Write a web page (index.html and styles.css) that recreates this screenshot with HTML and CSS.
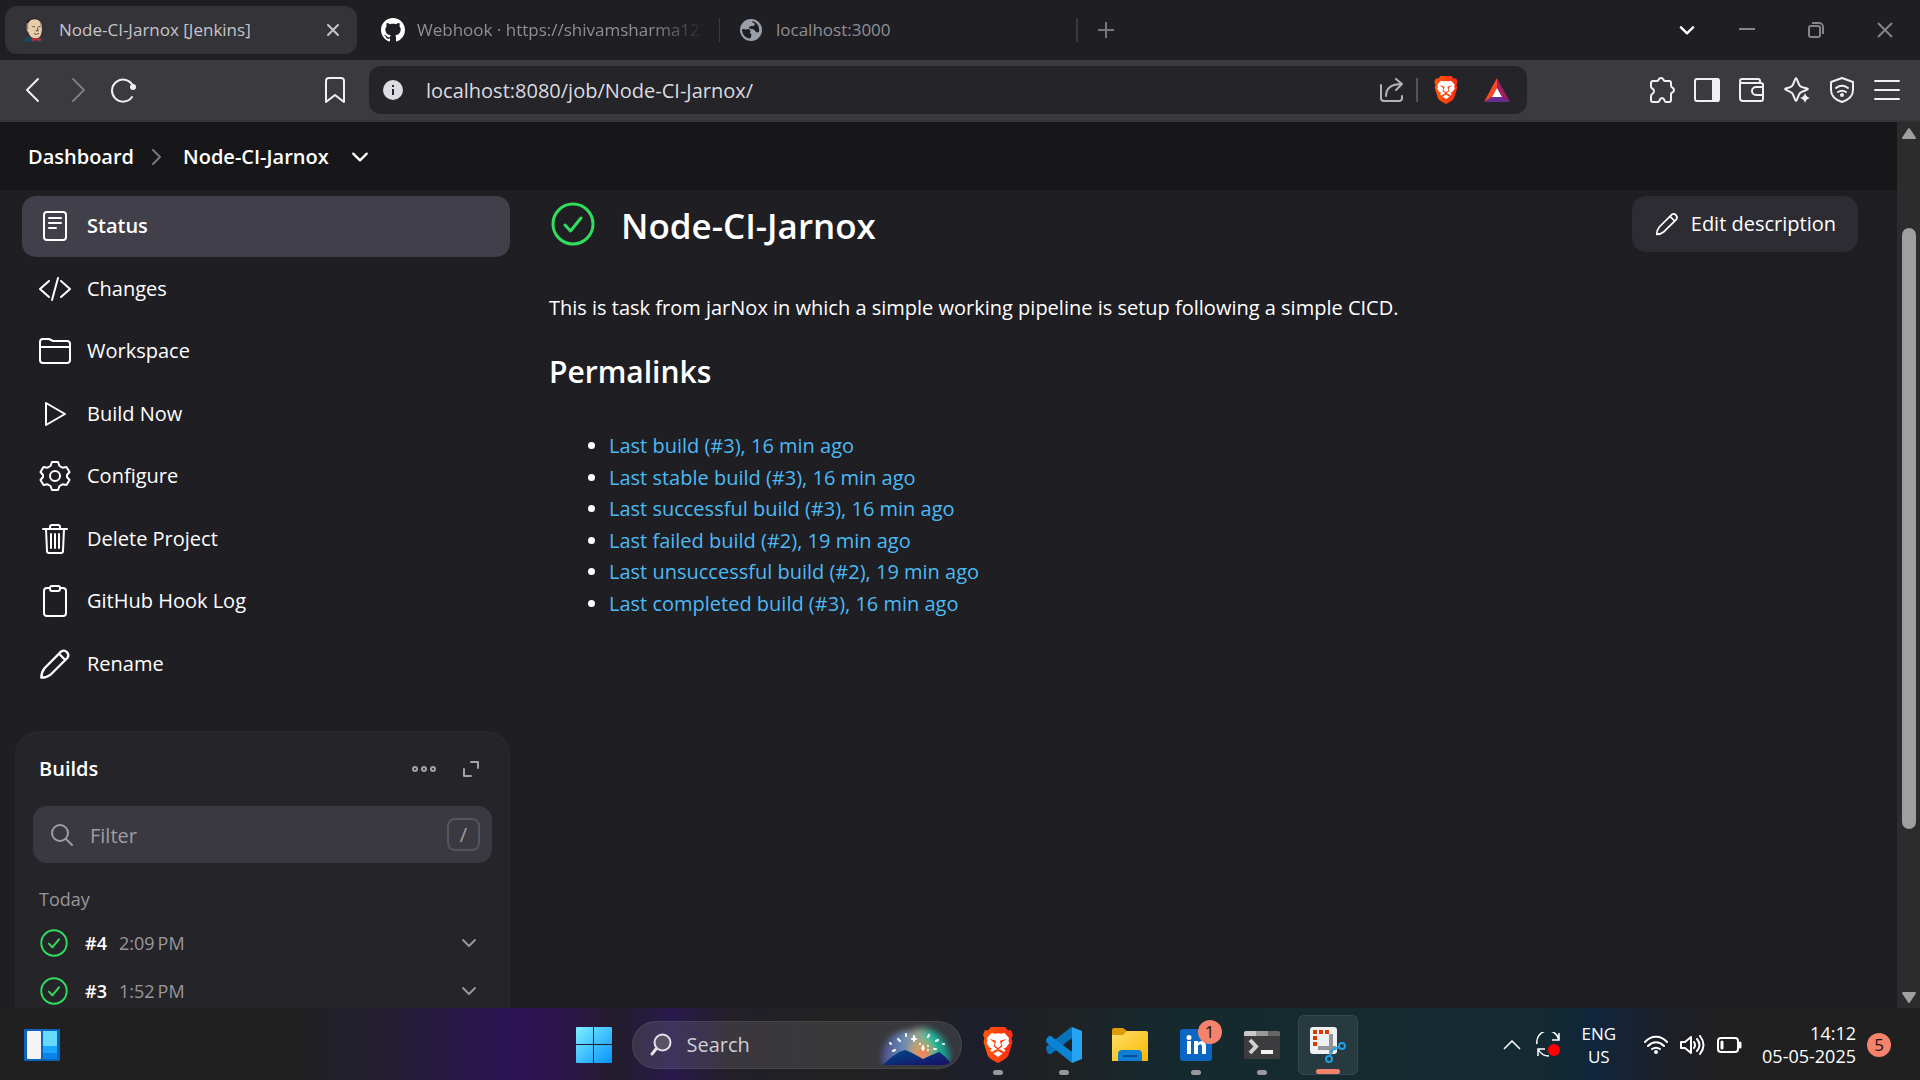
FILE: index.html
```html
<!DOCTYPE html>
<html lang="en">
<head>
<meta charset="utf-8">
<title>Node-CI-Jarnox [Jenkins]</title>
<link rel="stylesheet" href="styles.css">
</head>
<body>
<svg class="defs" aria-hidden="true">
  <defs>
    <linearGradient id="lion-bg" x1="0" x2="1"><stop offset="0" stop-color="#ff5a0a"/><stop offset="1" stop-color="#ff2a14"/></linearGradient>
    <symbol id="lion" viewBox="0 0 30 36">
      <path fill="url(#lion-bg)" d="M8 0h14l3 3.500 3-.5 2 5-1.500 3 1 4-4 13c-1 3-7 6.500-10.500 8-3.500-1.500-9.500-5-10.500-8L.5 15l1-4L0 8l2-5 3 .5z"/>
      <path fill="#fff" d="M8.500 6l3.500.8L15 6.300l3 .5 3.500-.8 4.500 5-.5 3 1 2-3.500 4.500-2.500 1 2 2-1.500 1.500-3-2-3-1-3 1-3 2L7 23.500l2-2-2.500-1L3.500 16l1-2-.5-3z"/>
      <path fill="#fff" d="M15 24l4.500 2.500L15 30l-4.500-3.500z"/>
      <path fill="#ff4310" d="M6.500 12l6 1.500.5 1-1.200 4L15 21l3.200-2.500-1.200-4 .5-1 6-1.500-4.500 3.200-.5 1.300 1 2.700L15 22.700l-4.500-3.500 1-2.700-.5-1.300z"/>
    </symbol>
    <symbol id="ok" viewBox="0 0 44 44">
      <circle cx="22" cy="22" r="20" fill="none" stroke="#30de5d" stroke-width="3"/>
      <path fill="none" stroke="#30de5d" stroke-width="3" stroke-linecap="round" stroke-linejoin="round" d="M14 23l5.500 6L30 16"/>
    </symbol>
    <symbol id="pencil" viewBox="0 0 28 28">
      <path d="M2 26c0-3 1-6 3-8.500L19.500 3a4 4 0 0 1 5.500 5.500L10.500 23C8 25 5 26 2 26zM17.500 5l5.500 5.500"/>
    </symbol>
    <symbol id="chev" viewBox="0 0 16 10"><path d="M2 2l6 6 6-6"/></symbol>
  </defs>
</svg>

<header class="tabs">
  <div class="tab tab-active">
    <svg class="fav" viewBox="0 0 24 28"><path fill="#16495c" d="M0 28c0-4 3-6 7-6l7 3 5-2c3 0 5 2 5 5z"/><path fill="#2b2320" d="M3 14C1 6 4 0 12 0c8 0 11 6 9 14z"/><path fill="#e8cda9" d="M4 12C4 5 7 1 13 1s9 5 8.500 12c-.5 8-3 11-7.500 11-6 0-8-5-9-8-2 0-2-4-1-4z"/><path fill="#8c8a86" d="M3 6l2 0v8l-2-1zM19 5l2 1v6z"/><path fill="none" stroke="#3a2c26" d="M10 10h3M17 10h3M16 11l1 4h-3M12 18c2 2 4 1 6 0"/><path fill="#d8232a" d="M10 23l5 2 5-2v5l-5-2-5 2z"/></svg>
    <a class="tab-name" href="#jenkins">Node-CI-Jarnox [Jenkins]</a>
    <button class="plain tab-close" aria-label="Close tab"><svg class="ln" width="16" height="16" viewBox="0 0 16 16"><path d="M3 3l10 10M13 3L3 13"/></svg></button>
  </div>
  <div class="tab tab-hook">
    <svg width="24" height="24" viewBox="0 0 16 16" fill="#fff"><path d="M8 0C3.580 0 0 3.580 0 8c0 3.540 2.290 6.530 5.470 7.590.4.070.55-.17.55-.38 0-.19-.01-.82-.01-1.490-2.010.37-2.530-.49-2.690-.94-.09-.23-.48-.94-.82-1.130-.28-.15-.68-.52-.01-.53.63-.01 1.080.58 1.230.82.72 1.210 1.870.87 2.330.66.07-.52.28-.87.51-1.070-1.780-.2-3.640-.89-3.640-3.950 0-.87.31-1.590.82-2.150-.08-.2-.36-1.020.08-2.120 0 0 .67-.21 2.200.82.64-.18 1.320-.27 2-.27s1.360.09 2 .27c1.530-1.040 2.200-.82 2.200-.82.44 1.100.16 1.920.08 2.120.51.56.82 1.270.82 2.150 0 3.070-1.870 3.750-3.650 3.950.29.25.54.73.54 1.480 0 1.070-.01 1.930-.01 2.200 0 .21.15.46.55.38A8 8 0 0 0 16 8c0-4.420-3.580-8-8-8z"/></svg>
    <a class="tab-name tab-fade" href="#hook">Webhook · https://shivamsharma123</a>
  </div>
  <div class="tab tab-local">
    <svg width="22" height="22" viewBox="0 0 22 22"><circle cx="11" cy="11" r="11" fill="#9aa0a9"/><path fill="#1f1e23" d="M2 10c2 0 4 1 6 0 2 0 3 2 2 4 2 1 2 3 0 5.500C6 19.500 2 16 2 10zM11 2c2 0 1 2 3 2 2 1 0 3-1 3-2 0-4 0-4 2 1 2 5 0 6 3 1 1 2 2 4 1 1-5-2-11-8-11z"/></svg>
    <a class="tab-name" href="#local">localhost:3000</a>
  </div>
  <button class="plain tab-add" aria-label="New tab"><svg class="ln" width="18" height="18" viewBox="0 0 18 18"><path d="M9 1v16M1 9h16"/></svg></button>
  <div class="win-controls">
    <button class="plain bright" aria-label="Search tabs"><svg class="ln" width="18" height="12"><use href="#chev"/></svg></button>
    <button class="plain" aria-label="Minimize"><svg class="ln" width="16" height="16" viewBox="0 0 16 16"><path d="M0 7h16"/></svg></button>
    <button class="plain" aria-label="Restore"><svg class="ln" width="16" height="16" viewBox="0 0 16 16"><rect x="1" y="4" width="11" height="11" rx="2"/><path d="M4 1h7a4 4 0 0 1 4 4v7"/></svg></button>
    <button class="plain" aria-label="Close"><svg class="ln" width="16" height="16" viewBox="0 0 16 16"><path d="M1 1l14 14M15 1L1 15"/></svg></button>
  </div>
</header>

<nav class="toolbar" aria-label="Browser">
  <div class="nav-buttons">
    <button class="plain" aria-label="Back"><svg class="ln" width="26" height="26" viewBox="0 0 26 26"><path d="M18 2L7 13l11 11"/></svg></button>
    <button class="plain dim" aria-label="Forward"><svg class="ln" width="26" height="26" viewBox="0 0 26 26"><path d="M8 2l11 11L8 24"/></svg></button>
    <button class="plain" aria-label="Reload"><svg class="ln" width="26" height="26" viewBox="0 0 26 26"><path d="M22 20a11 11 0 1 1 1-11"/><circle cx="23" cy="10" r="2" fill="currentColor"/></svg></button>
  </div>
  <button class="plain" aria-label="Bookmark"><svg class="ln" width="20" height="26" viewBox="0 0 20 26"><path d="M1 4a3 3 0 0 1 3-3h12a3 3 0 0 1 3 3v21l-9-7-9 7z"/></svg></button>
  <div class="address">
    <svg width="20" height="20" viewBox="0 0 20 20"><circle cx="10" cy="10" r="10" fill="#dddce2"/><path stroke="#252429" stroke-width="2" d="M10 9v6M10 5v2"/></svg>
    <input class="url" aria-label="Address" value="localhost:8080/job/Node-CI-Jarnox/">
    <button class="plain share" aria-label="Share"><svg class="ln" width="24" height="24" viewBox="0 0 24 24"><path d="M1 7v13a3 3 0 0 0 3 3h15a3 3 0 0 0 3-3v-2M6 18C6 10 11 6 22 6M16 1l6 5-6 6"/></svg></button>
    <span class="bar"></span>
    <button class="plain shield" aria-label="Shields"><svg width="24" height="28"><use href="#lion"/></svg></button>
    <button class="plain" aria-label="Rewards"><svg width="26" height="24" viewBox="0 0 26 24"><path fill="#ff4724" d="M13 0L0 24l8-5 5-9z"/><path fill="#9e1f63" d="M13 0l13 24-8-5-5-9z"/><path fill="#662d91" d="M0 24h26l-8-5H8z"/><path fill="#fff" d="M13 10l5 9H8z"/></svg></button>
  </div>
  <div class="ext">
    <button class="plain" aria-label="Extensions"><svg class="ln" width="26" height="26" viewBox="0 0 26 26"><path d="M4 4h4c2 0 1-3 4-3s2 3 4 3h4a2 2 0 0 1 2 2v3c0 2 3 1 3 4s-3 2-3 4v6a2 2 0 0 1-2 2h-3c-2 0-1-4-4-4s-2 4-4 4H4a2 2 0 0 1-2-2v-4c0-2 3-2 3-5s-3-2-3-4V6a2 2 0 0 1 2-2z"/></svg></button>
    <button class="plain" aria-label="Sidebar"><svg class="ln" width="26" height="26" viewBox="0 0 26 26"><rect x="1" y="2" width="24" height="22" rx="2"/><path fill="currentColor" d="M19 2h5v22h-5z"/></svg></button>
    <button class="plain" aria-label="Wallet"><svg class="ln" width="26" height="26" viewBox="0 0 26 26"><path d="M1 6v15a3 3 0 0 0 3 3h18a2 2 0 0 0 2-2V8a2 2 0 0 0-2-2H3a2 2 0 0 1 0-4h16a2 2 0 0 1 2 2v2M24 10h-7a4 4 0 0 0 0 8h7z"/></svg></button>
    <button class="plain" aria-label="Assistant"><svg class="ln" width="26" height="26" viewBox="0 0 26 26"><path d="M12 1c1 0 2 6 4 8s8 2 8 3-6 2-8 4-3 8-4 8-2-6-4-8-7-3-7-4 5-1 7-3 3-8 4-8z"/><path fill="currentColor" stroke="none" d="M21 16c1 3 2 4 5 5-3 1-4 2-5 5-1-3-2-4-5-5 3-1 4-2 5-5z"/></svg></button>
    <button class="plain" aria-label="VPN"><svg class="ln" width="26" height="26" viewBox="0 0 26 26"><path d="M13 1l11 4v8c0 6-5 10-11 12C7 23 2 19 2 13V5zM7 11c4-3 8-3 12 0M9 15c3-2 5-2 8 0"/><circle cx="13" cy="18" r="1" fill="currentColor"/></svg></button>
    <button class="plain" aria-label="Menu"><svg class="ln" width="26" height="26" viewBox="0 0 26 26"><path d="M1 4h24M1 13h24M1 22h24"/></svg></button>
  </div>
</nav>

<div class="viewport">
  <div class="page">
    <nav class="crumbs" aria-label="Breadcrumb">
      <a href="#dashboard">Dashboard</a>
      <svg class="ln crumb-sep" width="10" height="16" viewBox="0 0 10 16"><path d="M1 1l7 7-7 7"/></svg>
      <a href="#job">Node-CI-Jarnox</a>
      <button class="plain" aria-label="Job menu"><svg class="ln" width="18" height="12"><use href="#chev"/></svg></button>
    </nav>
    <div class="columns">
      <aside class="side">
        <ul class="tasks">
          <li><a class="task task-on" href="#status"><svg class="ln" viewBox="0 0 32 32"><rect x="5" y="2" width="22" height="28" rx="3"/><path d="M10 8h12M10 13h12M10 18h7"/></svg>Status</a></li>
          <li><a class="task" href="#changes"><svg class="ln" viewBox="0 0 32 32"><path d="M10 8l-9 8 9 8M22 8l9 8-9 8M19 5l-6 22"/></svg>Changes</a></li>
          <li><a class="task" href="#workspace"><svg class="ln" viewBox="0 0 32 32"><path d="M1 25V7a3 3 0 0 1 3-3h6l4 2h14a3 3 0 0 1 3 3v16a3 3 0 0 1-3 3H4a3 3 0 0 1-3-3zM1 12h30"/></svg>Workspace</a></li>
          <li><a class="task" href="#build"><svg class="ln" viewBox="0 0 32 32"><path d="M7 5v22l19-11z"/></svg>Build Now</a></li>
          <li><a class="task" href="#configure"><svg class="ln" viewBox="0 0 32 32"><circle cx="16" cy="16" r="5"/><path d="M13 2h6l1.500 4 3 1.700 4-.7 3 5-2.500 3v2l2.500 3-3 5-4-.7-3 1.700L19 30h-6l-1.500-4-3-1.700-4 .7-3-5L4 17v-2l-2.500-3 3-5 4 .7 3-1.700z"/></svg>Configure</a></li>
          <li><a class="task" href="#delete"><svg class="ln" viewBox="0 0 32 32"><path d="M4 6h24M11 6V4a2 2 0 0 1 2-2h6a2 2 0 0 1 2 2v2M7 6l1 22a2 2 0 0 0 2 2h12a2 2 0 0 0 2-2l1-22M12 11v14M16 11v14M20 11v14"/></svg>Delete Project</a></li>
          <li><a class="task" href="#hook-log"><svg class="ln" viewBox="0 0 32 32"><path d="M11 3H8a3 3 0 0 0-3 3v22a3 3 0 0 0 3 3h16a3 3 0 0 0 3-3V6a3 3 0 0 0-3-3h-3"/><rect x="11" y="1" width="10" height="5" rx="2"/></svg>GitHub Hook Log</a></li>
          <li><a class="task" href="#rename"><svg class="ln" viewBox="0 0 28 28"><use href="#pencil"/></svg>Rename</a></li>
        </ul>
        <section class="card">
          <div class="card-head">
            <h2>Builds</h2>
            <button class="plain" aria-label="More"><svg class="ln" width="24" height="8" viewBox="0 0 24 8"><circle cx="3" cy="4" r="2"/><circle cx="12" cy="4" r="2"/><circle cx="21" cy="4" r="2"/></svg></button>
            <button class="plain" aria-label="Expand"><svg class="ln" width="18" height="18" viewBox="0 0 18 18"><path d="M9 2h7v6M2 9v7h7"/></svg></button>
          </div>
          <div class="filter">
            <svg class="ln" width="22" height="22" viewBox="0 0 22 22"><circle cx="9" cy="9" r="8"/><path d="M15 15l6 6"/></svg>
            <input aria-label="Filter builds" placeholder="Filter">
            <kbd>/</kbd>
          </div>
          <h3>Today</h3>
          <ul class="builds">
            <li><svg width="28" height="28"><use href="#ok"/></svg><a href="#4">#4</a><span>2:09&#8201;PM</span><button class="plain" aria-label="Build 4 menu"><svg class="ln" width="16" height="10"><use href="#chev"/></svg></button></li>
            <li><svg width="28" height="28"><use href="#ok"/></svg><a href="#3">#3</a><span>1:52&#8201;PM</span><button class="plain" aria-label="Build 3 menu"><svg class="ln" width="16" height="10"><use href="#chev"/></svg></button></li>
          </ul>
        </section>
      </aside>
      <main class="main">
        <div class="job-head">
          <svg width="44" height="44"><use href="#ok"/></svg>
          <h1>Node-CI-Jarnox</h1>
          <button class="edit"><svg class="ln" width="24" height="24"><use href="#pencil"/></svg>Edit description</button>
        </div>
        <p class="desc">This is task from jarNox in which a simple working pipeline is setup following a simple CICD.</p>
        <h2 class="perma">Permalinks</h2>
        <ul class="links">
          <li><a href="#l1">Last build (#3), 16 min ago</a></li>
          <li><a href="#l2">Last stable build (#3), 16 min ago</a></li>
          <li><a href="#l3">Last successful build (#3), 16 min ago</a></li>
          <li><a href="#l4">Last failed build (#2), 19 min ago</a></li>
          <li><a href="#l5">Last unsuccessful build (#2), 19 min ago</a></li>
          <li><a href="#l6">Last completed build (#3), 16 min ago</a></li>
        </ul>
      </main>
    </div>
  </div>
  <div class="scroll" aria-hidden="true">
    <svg width="16" height="14" viewBox="0 0 16 14"><path fill="#9f9f9f" stroke="#9f9f9f" stroke-width="2" stroke-linejoin="round" d="M8 3l6 9H2z"/></svg>
    <span class="track-top"></span><span class="thumb"></span><span class="track-end"></span>
    <svg width="16" height="14" viewBox="0 0 16 14"><path fill="#9f9f9f" stroke="#9f9f9f" stroke-width="2" stroke-linejoin="round" d="M2 2h12l-6 9z"/></svg>
  </div>
</div>

<footer class="taskbar">
  <button class="plain widgets" aria-label="Widgets"><svg width="36" height="32" viewBox="0 0 36 32"><rect width="36" height="32" rx="1" fill="#0a64b8"/><rect x="3" y="2" width="14" height="28" rx="1" fill="#f4f4f4"/><path fill="#66d9ff" d="M19 2h14v15H19z"/><path fill="#1ba5fb" d="M19 17h14v7H19z"/><path fill="#0a84ea" d="M19 24h14v6H19z"/></svg></button>
  <div class="apps">
    <button class="plain start" aria-label="Start"><svg width="36" height="36" viewBox="0 0 36 36"><defs><linearGradient id="win" x1="0" y1="0" x2="36" y2="36" gradientUnits="userSpaceOnUse"><stop offset="0" stop-color="#7df0ff"/><stop offset="1" stop-color="#0792fb"/></linearGradient></defs><path fill="url(#win)" d="M0 1q0-1 1-1h16v17H0zM18 0h17q1 0 1 1v16H18zM0 18h17v18H1q-1 0-1-1zM18 18h18v17q0 1-1 1H18z"/></svg></button>
    <label class="search">
      <svg width="22" height="23" viewBox="0 0 22 23" fill="none" stroke="#e6e2ea" stroke-width="3" stroke-linecap="round"><circle cx="12.500" cy="9.500" r="8" fill="#5b5268" stroke-width="2"/><path d="M6 16l-4 5"/></svg>
      <input aria-label="Search" placeholder="Search">
      <svg width="76" height="44" viewBox="0 0 76 44"><defs><linearGradient id="sky"><stop offset="0" stop-color="#4b4c92"/><stop offset=".3" stop-color="#6787b5"/><stop offset=".52" stop-color="#a3a48c"/><stop offset=".72" stop-color="#22bda0"/><stop offset="1" stop-color="#188b83"/></linearGradient><linearGradient id="hill" x1="0" y1="0" x2="1" y2="1"><stop offset="0" stop-color="#004d86"/><stop offset="1" stop-color="#1b0767"/></linearGradient><radialGradient id="glow"><stop offset="0" stop-color="#ff7a58"/><stop offset="1" stop-color="#e9b34d" stop-opacity="0"/></radialGradient><filter id="soft" x="-20%" y="-20%" width="140%" height="140%"><feGaussianBlur stdDeviation="3"/></filter><clipPath id="hc"><path d="M0 0h76v28q0 14-12 14H6q-6 0-6-8z"/></clipPath></defs>
      <g clip-path="url(#hc)"><path filter="url(#soft)" fill="url(#sky)" d="M4 42C2 20 16 6 34 8c6-6 34-4 38 26l-2 8z"/><circle cx="45" cy="30" r="17" fill="url(#glow)"/><path fill="url(#hill)" d="M2 44C12 36 18 29 27 27q6 2 18 9 8-4 16-7 7 4 14 15z"/><path stroke="#fff" stroke-width="2" stroke-linecap="round" d="M15 28l2-1M12 20l1 1M20 16l2 2M28 11v2M50 14l1-2M58 18l2-1M65 21h1M56 26h2M36 13v5M34 16h4M44 25h2M45 23v4M42 21h0M50 23h0M50 27h0"/></g></svg>
    </label>
    <button class="plain app app-run" aria-label="Brave"><svg width="30" height="36"><use href="#lion"/></svg></button>
    <button class="plain app app-run" aria-label="Visual Studio Code"><svg width="36" height="36" viewBox="0 0 36 36"><path fill="#0873bd" d="M1 25l-1-4q0-1 1-2L24 1l2-1v11L5 27q-2 1-4-2z"/><path fill="#0a84d2" d="M1 11q2-3 4-2l21 16v11L1 16q-2-2 0-5z"/><path fill="#26a4f2" d="M26 0l10 4v28l-10 4z"/></svg></button>
    <button class="plain app" aria-label="File Explorer"><svg width="36" height="34" viewBox="0 0 36 34"><defs><linearGradient id="fold" x1="0" y1="0" x2="1" y2="1"><stop offset="0" stop-color="#ffdd6b"/><stop offset="1" stop-color="#f9b900"/></linearGradient></defs><path fill="#dd9b06" d="M0 2q0-2 2-2h9l4 3v8H0z"/><path fill="url(#fold)" d="M0 7h11l4-4h19q2 0 2 2v28H0z"/><path fill="#0f7fd4" d="M6 33V26q0-4 4-4h16q4 0 4 4v7z"/><path stroke="#084f97" stroke-width="2" d="M11 28h14"/></svg></button>
    <button class="plain app app-run" aria-label="LinkedIn"><svg width="32" height="32" viewBox="0 0 32 32"><rect width="32" height="32" rx="3" fill="#0a66c2"/><path fill="#fff" d="M7 12h4v13H7zM14 12h4v2c2-3 8-3 8 3v8h-4v-7c0-4-4-3-4 0v7h-4z"/><circle cx="9" cy="8.500" r="2.500" fill="#fff"/></svg><span class="badge app-badge">1</span></button>
    <button class="plain app app-run" aria-label="Terminal"><svg width="36" height="28" viewBox="0 0 36 28"><rect width="36" height="28" rx="2" fill="#3c3c3e"/><path fill="#c9c9c9" d="M0 5V2q0-2 2-2h10v5z"/><path fill="#999" d="M12 0h12v5H12z"/><path fill="#666" d="M24 0h10q2 0 2 2v3H24z"/><path fill="none" stroke="#d0d0d0" stroke-width="4" d="M6 9l6 6.500L6 22"/><path fill="#f2f2f2" d="M17 19h12v4H17z"/></svg></button>
    <button class="plain app app-on" aria-label="Snipping Tool"><svg width="36" height="36" viewBox="0 0 36 36"><rect width="27" height="27" rx="3" fill="#eef0f2"/><path fill="none" stroke="#d83b01" stroke-width="4" stroke-dasharray="4 2" d="M3 5h16M5 9v10"/><path fill="none" stroke="#8f959b" stroke-width="4" d="M21 7v19M8 21h18"/><g fill="none" stroke="#1ea0e6" stroke-width="2"><circle cx="32" cy="19" r="3"/><circle cx="19" cy="32" r="3"/><path d="M29 20l-7 3-2 6"/></g></svg></button>
  </div>
  <div class="tray">
    <button class="plain" aria-label="Hidden icons"><svg width="18" height="10" viewBox="0 0 18 10"><path fill="none" stroke="#fff" stroke-width="1.500" d="M1 9l8-8 8 8"/></svg></button>
    <button class="plain" aria-label="Update"><svg width="25" height="25" viewBox="0 0 25 25"><path fill="none" stroke="#fff" stroke-width="1.500" d="M1 12A11 11 0 0 1 23 8M23 1v7h-7M13 24C8 24 4 21 2 17M2 24v-7h7"/><circle cx="18" cy="18" r="6" fill="#f00"/></svg></button>
    <button class="plain lang"><span>ENG</span><span>US</span></button>
    <button class="plain sys" aria-label="Network, volume and battery">
      <svg class="ln" width="24" height="20" viewBox="0 0 24 20"><path d="M1 7c6-7 16-7 22 0M4 11c5-5 11-5 16 0M8 14c3-2 5-2 8 0"/><circle cx="12" cy="17" r="1" fill="currentColor"/></svg>
      <svg class="ln" width="25" height="20" viewBox="0 0 25 20"><path d="M1 7h4l6-5v16l-6-5H1zM14 7q2 3 0 6M17 4q5 6 0 12M20 1q7 9 0 18"/></svg>
      <svg class="ln" width="25" height="18" viewBox="0 0 25 18"><rect x="1" y="2" width="20" height="14" rx="3"/><path d="M23 7v4" stroke-width="3"/><path d="M5 6v6" stroke-width="3"/></svg>
    </button>
    <button class="plain clock"><span>14:12</span><span>05-05-2025</span></button>
    <span class="badge">5</span>
  </div>
</footer>
</body>
</html>
```
FILE: styles.css
```css
* { box-sizing: border-box; }

body {
  margin: 0;
  height: 100vh;
  display: flex;
  flex-direction: column;
  overflow: hidden;
  background: #1f1e23;
  color: #fff;
  font: 20px/30px "Open Sans", "Noto Sans", sans-serif;
}

a { color: inherit; text-decoration: none; }
ul { list-style: none; margin: 0; padding: 0; }
h1, h2, h3, p { margin: 0; }
svg { flex: none; display: block; }
input { font: inherit; color: inherit; background: none; border: 0; padding: 0; outline: 0; min-width: 0; flex: 1; }

.defs { position: absolute; width: 0; height: 0; }
.ln { fill: none; stroke: currentColor; stroke-width: 2; stroke-linecap: round; stroke-linejoin: round; }
.plain { display: flex; align-items: center; justify-content: center; padding: 0; border: 0; background: none; color: inherit; font: inherit; }

/* Tab strip */
.tabs { display: flex; align-items: center; height: 60px; flex: none; padding-left: 5px; background: #1f1e23; color: #8f8e94; font-size: 17px; }
.tab { display: flex; align-items: center; height: 48px; }
.tab-active { width: 352px; padding: 0 16px 0 19px; gap: 15px; border-radius: 12px; background: #343338; color: #c6c5ca; }
.fav { width: 20px; height: 24px; }
.tab-name { flex: 1; overflow: hidden; white-space: nowrap; }
.tab-hook { width: 362px; padding: 0 14px 0 24px; gap: 12px; }
.tab-fade { mask-image: linear-gradient(to right, #000 82%, transparent); }
.tab-local { width: 359px; height: 24px; padding-left: 20px; gap: 14px; border: solid #3b3a3f; border-width: 0 2px 0 1px; }
.tab-add { width: 56px; color: #77767c; }
.tab-add .ln { stroke-linecap: butt; }
.win-controls { margin-left: auto; display: flex; padding-right: 1px; color: #858489; }
.win-controls button { width: 69px; height: 48px; }
.win-controls button:first-child { width: 50px; }
.win-controls .ln { stroke-linecap: butt; }
.win-controls .bright { color: #fff; }

/* Address row */
.toolbar { display: flex; align-items: center; height: 62px; flex: none; padding: 0 20px; background: #3b3a3f; border-bottom: 2px solid #34333a; color: #f0eff4; }
.nav-buttons { display: flex; gap: 19px; margin-right: auto; }
.dim { color: #7c7b80; }
.address { display: flex; align-items: center; width: 1158px; flex: 0 1 auto; height: 48px; margin: 0 122px 0 24px; padding: 0 17px 0 14px; border-radius: 12px; background: #252429; }
.url { margin-left: 23px; padding-top: 1px; color: #dcdbe0; }
.share { color: #b4b3b8; }
.bar { width: 2px; height: 24px; margin: 0 16px 0 12px; background: #55545a; }
.shield { margin-right: 26px; }
.ext { display: flex; gap: 19px; }

/* Page area */
.viewport { flex: 1; min-height: 0; display: flex; }
.page { flex: 1; min-width: 0; overflow: hidden; }
.crumbs { display: flex; align-items: center; height: 68px; padding: 2px 0 0 28px; background: #171719; font-weight: 600; }
.crumb-sep { margin: 0 21px 0 18px; color: #77767c; }
.crumbs button { margin-left: 22px; }
.columns { display: flex; padding: 6px 39px 0 15px; gap: 39px; }

.side { flex: 0 0 495px; }
.tasks { display: grid; grid-auto-rows: 1fr; gap: 2px; min-height: 498px; margin-left: 7px; }
.task { display: flex; align-items: center; gap: 16px; height: 100%; padding-left: 17px; border-radius: 14px; }
.task svg { width: 32px; height: 32px; }
.task-on { background: #403f4a; font-weight: 600; }

.card { margin-top: 37px; padding: 18px 16px 40px; height: 440px; border: 2px solid #28272c; border-radius: 24px; background: #252429; }
.card-head { display: flex; align-items: center; height: 36px; padding: 0 12px 0 6px; gap: 26px; color: #a3a2a7; }
.card-head h2 { margin-right: auto; color: #fff; font-size: 20px; font-weight: 600; }
.filter { display: flex; align-items: center; gap: 17px; height: 57px; margin-top: 19px; padding: 0 12px 0 18px; border-radius: 14px; background: #3a3941; color: #9e9da3; }
.filter input { padding-top: 2px; }
.filter input::placeholder { color: #9e9da3; opacity: 1; }
kbd { display: flex; align-items: center; justify-content: center; width: 33px; height: 33px; border: 2px solid #55545d; border-radius: 8px; font: inherit; }
.card h3 { margin: 21px 6px 5px; color: #98979c; font-size: 18px; font-weight: 400; }
.builds li { display: flex; align-items: center; height: 48px; padding: 0 15px 0 7px; color: #98979c; }
.builds a { width: 34px; margin-left: 17px; color: #fff; font-weight: 600; font-size: 18px; }
.builds span { font-size: 18px; }
.builds button { margin-left: auto; }

.main { flex: 1; min-width: 0; }
.job-head { display: flex; align-items: center; height: 56px; padding-left: 2px; }
h1 { margin-left: 26px; padding-top: 3px; font-size: 35px; line-height: 48px; font-weight: 600; }
.edit { display: flex; align-items: center; gap: 12px; height: 56px; margin-left: auto; padding: 0 22px 0 23px; border: 0; border-radius: 14px; background: #2d2c33; color: #fff; font: inherit; }
.desc { margin-top: 41px; }
.perma { margin-top: 29px; font-size: 30px; line-height: 40px; font-weight: 600; }
.links { display: grid; grid-auto-rows: 1fr; min-height: 189px; margin-top: 39px; padding-left: 60px; list-style: disc; }
.links a { color: #4cbaf3; }

.scroll { display: flex; flex-direction: column; align-items: center; width: 23px; padding: 4px 0 2px; background: #2c2c2c; }
.scroll svg { margin: 0 0 1px; }
.track-top { flex: 87; }
.thumb { flex: 600; width: 14px; border-radius: 7px; background: #9f9f9f; }
.track-end { flex: 162; }

/* Taskbar */
.taskbar {
  display: grid;
  grid-template-columns: 1fr auto 1fr;
  align-items: center;
  height: 72px;
  flex: none;
  padding: 1px 29px 0 24px;
  background: linear-gradient(to right, #202020 0, #202020 15%, #231e31 20%, #2b1256 27%, #2b1746 30%, #231c2b 32%, #281a4b 35%, #221f28 38%, #212122 43%, #212023 48%, #1c1f2b 51%, #202123 55%, #142a2f 61%, #142b31 80%, #10263c 83%, #1d1f27 87%, #202020 90%);
}
.widgets { justify-self: start; }
.apps { display: flex; align-items: center; gap: 6px; margin-left: 18px; }
.start { margin-right: 14px; }
.search { display: flex; align-items: center; width: 330px; height: 48px; padding: 0 7px 0 17px; border: 1px solid #ffffff12; border-radius: 24px; background: #ffffff1c; }
.search input { margin-left: 15px; color: #cfced3; }
.search input::placeholder { color: #cfced3; opacity: 1; }
.app { position: relative; width: 60px; height: 60px; border-radius: 6px; }
.app-run::after, .app-on::after { content: ""; position: absolute; bottom: 0; left: 25px; width: 10px; height: 5px; border-radius: 3px; background: #99999c; }
.app-on { background: #ffffff14; border: 1px solid #ffffff12; }
.app-on::after { left: 17px; width: 24px; background: #f5836b; }
.badge { display: flex; align-items: center; justify-content: center; width: 24px; height: 24px; border-radius: 50%; background: #f5836b; color: #1c1210; font-size: 17px; line-height: 24px; }
.app-badge { position: absolute; top: 5px; right: 4px; }
.tray { display: flex; align-items: center; justify-content: flex-end; color: #fff; font-size: 17px; line-height: 23px; }
.tray > button:first-child { margin-right: 15px; }
.lang, .clock { flex-direction: column; }
.lang { margin: 0 28px 0 20px; }
.sys { gap: 12px; }
.clock { margin: 0 11px 0 20px; align-items: flex-end; font-size: 18px; }
```
